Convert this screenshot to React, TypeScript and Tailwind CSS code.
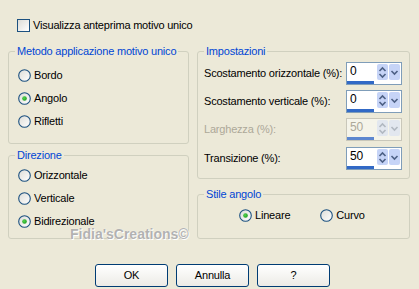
import React from "react";

const font = { fontFamily: '"Liberation Sans", Arial, sans-serif', letterSpacing: "-0.2px" };

function Radio({ checked }: { checked?: boolean }) {
  return (
    <svg width="13" height="13" viewBox="0 0 13 13" className="shrink-0">
      <defs>
        <linearGradient id="rg" x1="0" y1="0" x2="1" y2="1">
          <stop offset="0" stopColor="#DCDCD7" />
          <stop offset="1" stopColor="#FFFFFF" />
        </linearGradient>
        <radialGradient id="dot" cx="0.4" cy="0.4" r="0.6">
          <stop offset="0" stopColor="#55D551" />
          <stop offset="1" stopColor="#21A121" />
        </radialGradient>
      </defs>
      <circle cx="6.5" cy="6.5" r="5.8" fill="url(#rg)" stroke="#1C5180" strokeWidth="1.1" />
      {checked && <circle cx="6.5" cy="6.5" r="2.3" fill="url(#dot)" />}
    </svg>
  );
}

function RadioRow({ label, checked }: { label: string; checked?: boolean }) {
  return (
    <div className="flex items-center h-[13px] gap-[3px] whitespace-nowrap">
      <Radio checked={checked} />
      <span className="leading-[13px]">{label}</span>
    </div>
  );
}

function SpinBox({ value, disabled }: { value: string; disabled?: boolean }) {
  return (
    <div
      className={
        "w-[56px] h-[23px] border flex shrink-0 " +
        (disabled ? "border-[#C9C7BA] bg-[#F5F4EA]" : "border-[#7F9DB9] bg-white")
      }
    >
      <div className="flex flex-col w-[30px]">
        <div
          className={
            "flex-1 pl-[3px] text-[12px] leading-[17px] " +
            (disabled ? "text-[#ACA899]" : "text-black")
          }
        >
          {value}
        </div>
        <div className={"h-[3px] w-[27px] " + (disabled ? "bg-[#5D87CF]" : "bg-[#3169C6]")} />
      </div>
      <div className={"flex gap-[1px] pt-[1px] pb-[4px] " + (disabled ? "opacity-40" : "")}>
        <div className="w-[11px] h-full bg-[#C6D4F7] rounded-[2px] flex items-center justify-center">
          <svg width="9" height="13" viewBox="0 0 9 13">
            <path d="M1.5 5 L4.5 2 L7.5 5" fill="none" stroke="#4D6185" strokeWidth="1.6" />
            <path d="M1.5 8 L4.5 11 L7.5 8" fill="none" stroke="#4D6185" strokeWidth="1.6" />
          </svg>
        </div>
        <div className="w-[11px] h-full bg-[#C6D4F7] rounded-[2px] flex items-center justify-center">
          <svg width="9" height="7" viewBox="0 0 9 7">
            <path d="M1.5 2 L4.5 5 L7.5 2" fill="none" stroke="#4D6185" strokeWidth="1.6" />
          </svg>
        </div>
      </div>
    </div>
  );
}

function SettingRow({ label, value, disabled }: { label: string; value: string; disabled?: boolean }) {
  return (
    <div className="flex items-center justify-between h-[23px] pr-[7px]">
      <span className={"whitespace-nowrap " + (disabled ? "text-[#ACA899]" : "text-black")}>{label}</span>
      <SpinBox value={value} disabled={disabled} />
    </div>
  );
}

function Btn({ label }: { label: string }) {
  return (
    <button className="w-[73px] h-[23px] rounded-[3px] border border-[#003C74] bg-gradient-to-b from-white to-[#ECEBE6] text-black text-[11px] leading-[21px]">
      {label}
    </button>
  );
}

const legendCls = "ml-[6px] px-[2px] text-[#0046D5] leading-[13px] whitespace-nowrap";
const fsCls = "border border-[#D0D0BF] rounded-[3px] m-0 min-w-0 p-0";

export default function App() {
  return (
    <div
      className="relative w-[419px] h-[289px] bg-[#ECE9D8] text-[11px] text-black overflow-hidden"
      style={font}
    >
      <div className="pt-[19px] pl-[17px] flex items-center gap-[3px] h-[32px]">
        <div className="w-[13px] h-[13px] border border-[#1C5180] bg-gradient-to-br from-[#DCDCD7] to-white" />
        <span className="leading-[13px] whitespace-nowrap">Visualizza anteprima motivo unico</span>
      </div>

      <div className="flex gap-[8px] pl-[8px] mt-[13px]">
        {/* Left column */}
        <div className="flex flex-col w-[181px]">
          <fieldset className={fsCls + " h-[99px]"}>
            <legend className={legendCls}>Metodo applicazione motivo unico</legend>
            <div className="flex flex-col gap-[10px] pl-[9px] pt-[11px]">
              <RadioRow label="Bordo" />
              <RadioRow label="Angolo" checked />
              <RadioRow label="Rifletti" />
            </div>
          </fieldset>
          <fieldset className={fsCls + " h-[90px] mt-[5px]"}>
            <legend className={legendCls}>Direzione</legend>
            <div className="flex flex-col gap-[10px] pl-[9px] pt-[7px]">
              <RadioRow label="Orizzontale" />
              <RadioRow label="Verticale" />
              <RadioRow label="Bidirezionale" checked />
            </div>
          </fieldset>
        </div>

        {/* Right column */}
        <div className="flex flex-col w-[213px]">
          <fieldset className={fsCls + " h-[134px]"}>
            <legend className={legendCls}>Impostazioni</legend>
            <div className="flex flex-col gap-[5px] pl-[6px] pt-[4px]">
              <SettingRow label="Scostamento orizzontale (%):" value="0" />
              <SettingRow label="Scostamento verticale (%):" value="0" />
              <SettingRow label="Larghezza (%):" value="50" disabled />
              <div className="mt-[1px]">
                <SettingRow label="Transizione (%):" value="50" />
              </div>
            </div>
          </fieldset>
          <fieldset className={fsCls + " h-[51px] mt-[9px]"}>
            <legend className={legendCls}>Stile angolo</legend>
            <div className="flex gap-[30px] pt-[8px] pl-[41px]">
              <RadioRow label="Lineare" checked />
              <RadioRow label="Curvo" />
            </div>
          </fieldset>
        </div>
      </div>

      <div className="flex gap-[8px] pl-[95px] mt-[25px]">
        <Btn label="OK" />
        <Btn label="Annulla" />
        <Btn label="?" />
      </div>

      <div
        className="absolute left-[70px] top-[226px] text-[14px] font-bold text-[#B2B2B2] leading-[16px] pointer-events-none"
        style={{ textShadow: "0 0 1px #fff, 1px 1px 0 #fff", letterSpacing: "0" }}
      >
        Fidia'sCreations©
      </div>
    </div>
  );
}
